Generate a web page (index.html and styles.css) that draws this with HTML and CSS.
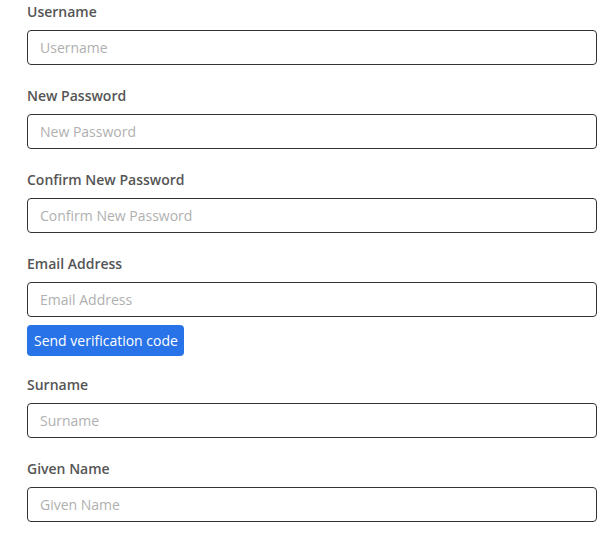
FILE: index.html
```html
<!DOCTYPE html>
<html>
<head>
<meta charset="utf-8">
<link rel="stylesheet" href="styles.css">
</head>
<body>
<form class="form">
  <div class="group">
    <label class="label">Username</label>
    <input class="input" type="text" placeholder="Username">
  </div>
  <div class="group">
    <label class="label">New Password</label>
    <input class="input" type="password" placeholder="New Password">
  </div>
  <div class="group">
    <label class="label">Confirm New Password</label>
    <input class="input" type="password" placeholder="Confirm New Password">
  </div>
  <div class="group group-tight">
    <label class="label">Email Address</label>
    <input class="input" type="text" placeholder="Email Address">
    <button class="btn" type="button">Send verification code</button>
  </div>
  <div class="group">
    <label class="label">Surname</label>
    <input class="input" type="text" placeholder="Surname">
  </div>
  <div class="group">
    <label class="label">Given Name</label>
    <input class="input" type="text" placeholder="Given Name">
  </div>
</form>
</body>
</html>
```
FILE: styles.css
```css
html, body {
  margin: 0;
  padding: 0;
  background: #fff;
}
body {
  font-family: "Open Sans", "Noto Sans", sans-serif;
  font-size: 14px;
  color: #555;
}
.form {
  width: 570px;
  padding: 1px 0 0 27px;
  display: flex;
  flex-direction: column;
  gap: 20px;
}
.group {
  display: flex;
  flex-direction: column;
  align-items: flex-start;
}
.group-tight {
  margin-bottom: -2px;
}
.label {
  font-weight: 600;
  font-size: 14px;
  line-height: 21px;
  margin-bottom: 8px;
  color: #555;
}
.input {
  box-sizing: border-box;
  width: 570px;
  height: 35px;
  margin: 0;
  padding: 0 12px;
  border: 1px solid #333;
  border-radius: 4px;
  font-family: inherit;
  font-size: 14px;
  color: #333;
  outline: none;
}
.input::placeholder {
  color: #b0b0b0;
}
.btn {
  margin-top: 8px;
  height: 31px;
  padding: 0 6px 0 7px;
  border: none;
  border-radius: 4px;
  background: #2873e8;
  color: #fff;
  font-family: inherit;
  font-size: 14px;
  cursor: pointer;
}
```
